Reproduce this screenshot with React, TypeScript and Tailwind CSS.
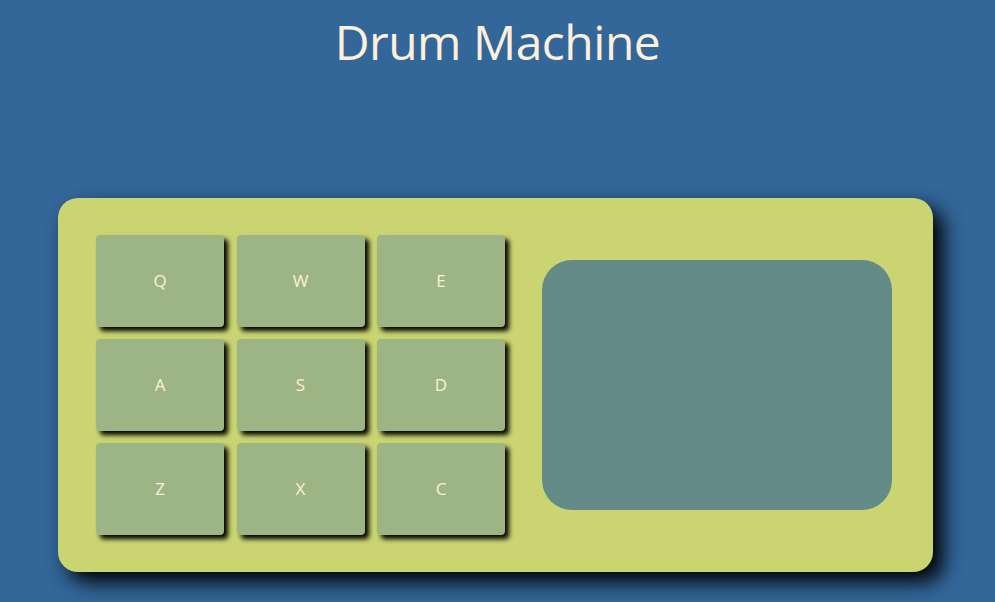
import React from "react";

// Pad data
const pads = ["Q", "W", "E", "A", "S", "D", "Z", "X", "C"];

const DrumPad = ({ label }: { label: string }) => {
  return (
    <button className="w-[128px] h-[92px] rounded-[4px] bg-[#9db584] text-[#fdf0da] text-[17px] font-medium shadow-[4px_4px_5px_#000] flex items-center justify-center">
      {label}
    </button>
  );
};

const App = () => {
  return (
    <main
      className="w-full min-h-[602px] bg-[#336699] overflow-hidden"
      style={{ fontFamily: '"Open Sans", "Noto Sans", sans-serif' }}
    >
      <h1 className="pt-[6px] text-center text-[48px] leading-[72px] text-[#fdf0da] tracking-[-0.5px]">
        Drum Machine
      </h1>

      <div className="ml-[58px] mt-[120px] w-[875px] h-[374px] rounded-[20px] bg-[#cad572] shadow-[10px_10px_20px_#000] flex items-center pl-[38px] pr-[41px]">
        {/* Pads */}
        <div className="grid grid-cols-3 gap-x-[12.5px] gap-y-[12px]">
          {pads.map((p) => (
            <DrumPad key={p} label={p} />
          ))}
        </div>

        {/* Display */}
        <div className="ml-[37px] w-[350px] h-[250px] rounded-[30px] bg-[#648b88]" />
      </div>
    </main>
  );
};

export default App;
